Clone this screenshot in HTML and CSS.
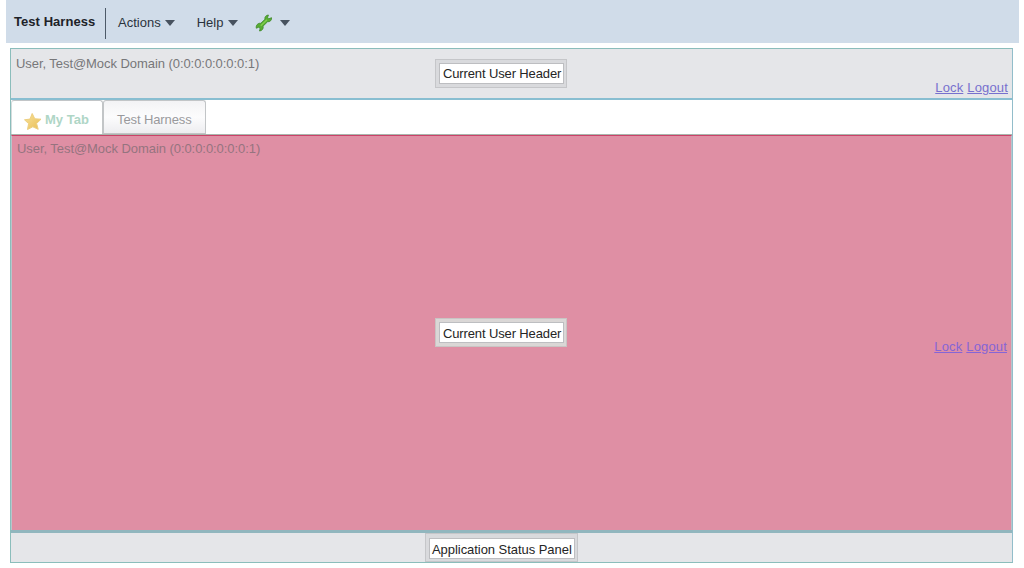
FILE: index.html
```
<!DOCTYPE html>
<html lang="en">
<head>
<meta charset="utf-8">
<title>Test Harness</title>
<link rel="stylesheet" href="styles.css">
</head>
<body>
<div class="app">
  <header class="toolbar">
    <div class="brand">Test Harness</div>
    <div class="menu actions"><span class="actions-text">Actions</span><i class="caret"></i></div>
    <div class="menu help"><span class="help-text">Help</span><i class="caret"></i></div>
    <div class="menu tools">
      <svg class="wrench" viewBox="0 0 18 18" width="18" height="18">
        <path d="M5.8 9.3 10 5.3C9.400 3.200 10.800 1.200 13.400 1L12.600 3.400 14 4.800 16.500 3.700C17 6 15 8.200 12.600 7.700L8 12.200C8.800 14.500 7 16.900 4.500 17L5.200 14.600 3.700 13.200 1.300 14.200C.7 11.200 3 8.800 5.800 9.300Z" fill="#58ad32" stroke="#448c30" stroke-width=".9" stroke-linejoin="round"/>
        <path d="M5.800 11.700 12 5.800" stroke="#82cf4c" stroke-width="1.300" fill="none"/>
      </svg>
      <i class="caret"></i>
    </div>
  </header>
  <main class="frame">
    <section class="user-panel">
      <span class="user-name">User, Test@Mock Domain (0:0:0:0:0:0:0:1)</span>
      <span class="label"><span class="label-text">Current User Header</span></span>
      <nav class="links"><a class="lock" href="#">Lock</a><a class="logout" href="#">Logout</a></nav>
    </section>
    <div class="tabs">
      <div class="tab active">
        <svg class="star" viewBox="0 0 20 19" width="20" height="19">
          <defs><linearGradient id="gold" x1="0" y1="0" x2="1" y2="1"><stop offset="0" stop-color="#f9e29a"/><stop offset="1" stop-color="#e9bd55"/></linearGradient></defs>
          <path d="M9.200 1.500 11.800 6.800 18 7.200 13.600 11.500 15.200 17.300 9.800 14.800 4.500 17.500 5.600 11.600 1.500 7.800 7 7.100Z" fill="url(#gold)" stroke="#edcf80" stroke-width="1" stroke-linejoin="round"/>
        </svg>
        <span class="mytab-text">My Tab</span>
      </div>
      <div class="tab inactive"><span class="harness-text">Test Harness</span></div>
    </div>
    <section class="user-panel content">
      <span class="user-name">User, Test@Mock Domain (0:0:0:0:0:0:0:1)</span>
      <span class="label"><span class="label-text">Current User Header</span></span>
      <nav class="links"><a class="lock" href="#">Lock</a><a class="logout" href="#">Logout</a></nav>
    </section>
    <footer class="status"><span class="label"><span class="label-text">Application Status Panel</span></span></footer>
  </main>
</div>
</body>
</html>
```
FILE: styles.css
```
* { box-sizing: border-box; }
body {
  margin: 0;
  background: #fff;
  font: 13px/16px "Liberation Sans", Arial, sans-serif;
  color: #222;
}
.app { height: 568px; overflow: hidden; }
.toolbar {
  display: flex;
  width: 1013px;
  height: 43px;
  margin-left: 6px;
  padding-top: 8px;
  background: #d0dce9;
}
.brand {
  width: 100px;
  height: 31px;
  padding: 6px 0 0 8px;
  border-right: 1px solid #4d5a68;
  font-weight: bold;
  letter-spacing: .05px;
  color: #1d2228;
}
.menu { display: flex; height: 29px; align-items: center; color: #2b333c; }
.actions { margin-left: 12px; gap: 4px; }
.help { margin-left: 22px; gap: 5px; }
.tools { margin-left: 17px; gap: 7px; }
.caret {
  border: 5px solid transparent;
  border-top: 6px solid #47525f;
  border-bottom: 0;
}
.frame {
  display: grid;
  grid-template-rows: 49px 37px 395px 1fr;
  width: 1003px;
  height: 515px;
  margin: 5px 0 0 10px;
  border: 1px solid #8bbdbb;
  border-right-color: #92bdca;
}
.user-panel {
  display: grid;
  grid-template-columns: 419px 132px 1fr;
  padding: 0 4px 0 5px;
  background: #e5e6e9;
  color: #777779;
}
.user-name { padding-top: 7px; letter-spacing: -.06px; white-space: nowrap; }
.label {
  display: block;
  padding: 4px 3px 4px 4px;
  width: 132px;
  height: 29px;
  border: 1px solid #c5c6c9;
  background: #d9dadd;
  align-self: center;
}
.label-text {
  display: block;
  height: 21px;
  margin: -1px;
  padding: 2px 0 0 3px;
  border: 1px solid #bdbec1;
  background: #fff;
  color: #252525;
  letter-spacing: -.13px;
  white-space: nowrap;
}
.links { display: flex; justify-content: flex-end; align-self: end; gap: 4px; padding-bottom: 2px; }
.links a { color: #7770ce; letter-spacing: .15px; }
.tabs {
  display: flex;
  border-top: 2px solid #88bed1;
  border-bottom: 1px solid #a9b5ac;
}
.tab { height: 34px; border: 1px solid #c2c5c7; border-bottom: 0; border-radius: 3px 3px 0 0; }
.active {
  display: flex;
  width: 92px;
  padding: 11px 0 0 11px;
  border-left-color: #d6dddd;
  font-weight: bold;
  color: #afd6c6;
}
.star { margin-right: 2px; flex: none; }
.inactive {
  width: 103px;
  padding: 11px 0 0 13px;
  border-bottom: 1px solid #c3c3c5;
  background: linear-gradient(#f3f3f5, #fcfcfd 50%, #ededf0);
  color: #99999c;
  letter-spacing: -.1px;
}
.content {
  border: solid #b9c5cb;
  border-width: 1px 1px 0;
  border-top-color: #ca4268;
  background: #df8fa4;
  color: #95747f;
  grid-template-columns: 418px 132px 1fr;
}
.content .user-name { padding-top: 5px; }
.content .label { margin-top: -2px; border-color: #c9c5c4; background: #dad7d6; }
.content .label-text { padding-top: 3px; }
.content .links { align-self: center; padding-top: 29px; }
.content .links a { color: #8565d6; }
.status {
  display: flex;
  padding-left: 414px;
  border-top: 3px solid #91b6be;
  background: #e5e6e9;
}
.status .label { width: 153px; height: 29px; padding-top: 5px; }
.status .label-text { letter-spacing: -.05px; padding: 3px 0 0 2px; }
```
